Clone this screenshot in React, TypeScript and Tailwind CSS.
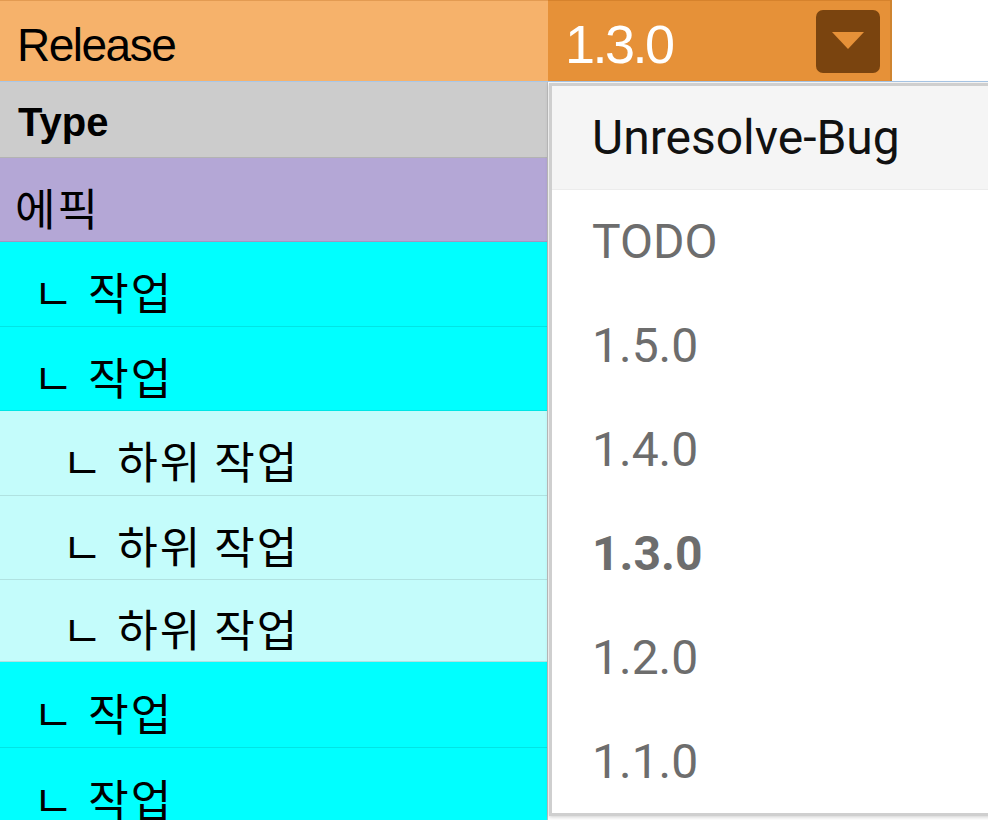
import React from "react";

type Row = { label: string; indent: number; bg: string; h: number };

const rows: Row[] = [
  { label: "에픽", indent: 0, bg: "bg-[#b4a7d6]", h: 84 },
  { label: "작업", indent: 1, bg: "bg-[#00ffff]", h: 85 },
  { label: "작업", indent: 1, bg: "bg-[#00ffff]", h: 84 },
  { label: "하위 작업", indent: 2, bg: "bg-[#c4fcfb]", h: 85 },
  { label: "하위 작업", indent: 2, bg: "bg-[#c4fcfb]", h: 84 },
  { label: "하위 작업", indent: 2, bg: "bg-[#c4fcfb]", h: 82 },
  { label: "작업", indent: 1, bg: "bg-[#00ffff]", h: 86 },
  { label: "작업", indent: 1, bg: "bg-[#00ffff]", h: 86 },
];

const options = ["Unresolve-Bug", "TODO", "1.5.0", "1.4.0", "1.3.0", "1.2.0", "1.1.0"];

const kr = { fontFamily: '"Noto Sans CJK KR", "Noto Sans", sans-serif' };
const lat = { fontFamily: '"Liberation Sans", Arial, sans-serif' };
const rob = { fontFamily: 'Roboto, "Liberation Sans", sans-serif' };

export default function App() {
  return (
    <div className="relative w-[988px] h-[820px] overflow-hidden bg-white">
      {/* header row */}
      <div className="flex h-[82px] border-b border-[#a9c7e8]">
        <div
          className="w-[548px] h-full bg-[#f6b26b] border-t border-[#e39b52] flex items-center pl-[17px] pt-[8px] text-[46px] tracking-[-1.5px] text-black"
          style={lat}
        >
          Release
        </div>
        <div className="w-[344px] h-full bg-[#e69138] border-t border-[#d6822c] border-r-2 border-r-[#cf842f] flex items-center justify-between pl-[17px] pr-[10px]">
          <span className="text-white text-[54px] tracking-[-2.5px] pt-[6px] leading-none" style={lat}>
            1.3.0
          </span>
          <div className="w-[64px] h-[63px] rounded-[7px] bg-[#7a440f] flex items-center justify-center">
            <svg width="32" height="18" viewBox="0 0 32 18">
              <polygon points="0,0 32,0 16,17" fill="#e69138" />
            </svg>
          </div>
        </div>
      </div>

      {/* left column */}
      <div className="w-[548px] flex flex-col border-r border-[#bdbdbd]">
        <div
          className="h-[76px] bg-[#cccccc] border-b border-[#b3b3b3] flex items-center pl-[18px] pt-[4px] text-[40px] font-bold text-black"
          style={lat}
        >
          Type
        </div>
        {rows.map((r, i) => (
          <div
            key={i}
            className={`${r.bg} border-b border-black/10 flex items-center text-[44px] tracking-[2px] text-black`}
            style={{ ...kr, height: r.h }}
          >
            {r.indent === 0 ? (
              <div className="pl-[15px] pt-[14px]">{r.label}</div>
            ) : (
              <div className={r.indent === 1 ? "pl-[33px] pt-[14px]" : "pl-[62px] pt-[14px]"}>
                <span className="mr-[1px]">ㄴ</span> {r.label}
              </div>
            )}
          </div>
        ))}
      </div>

      {/* dropdown overlay */}
      <div className="absolute left-[549px] top-[83px] w-[470px] h-[733px] bg-white border-[3px] border-[#cfcfcf] shadow-[0_1px_4px_rgba(0,0,0,0.2)]">
        {options.map((o, i) => (
          <div
            key={o}
            className={`h-[104px] flex items-center pl-[40px] text-[48px] ${
              i === 0 ? "bg-[#f5f5f5] text-[#111] border-b border-[#ececec]" : "text-[#6d6d6d]"
            } ${o === "1.3.0" ? "font-bold" : ""}`}
            style={rob}
          >
            {o}
          </div>
        ))}
      </div>
    </div>
  );
}
